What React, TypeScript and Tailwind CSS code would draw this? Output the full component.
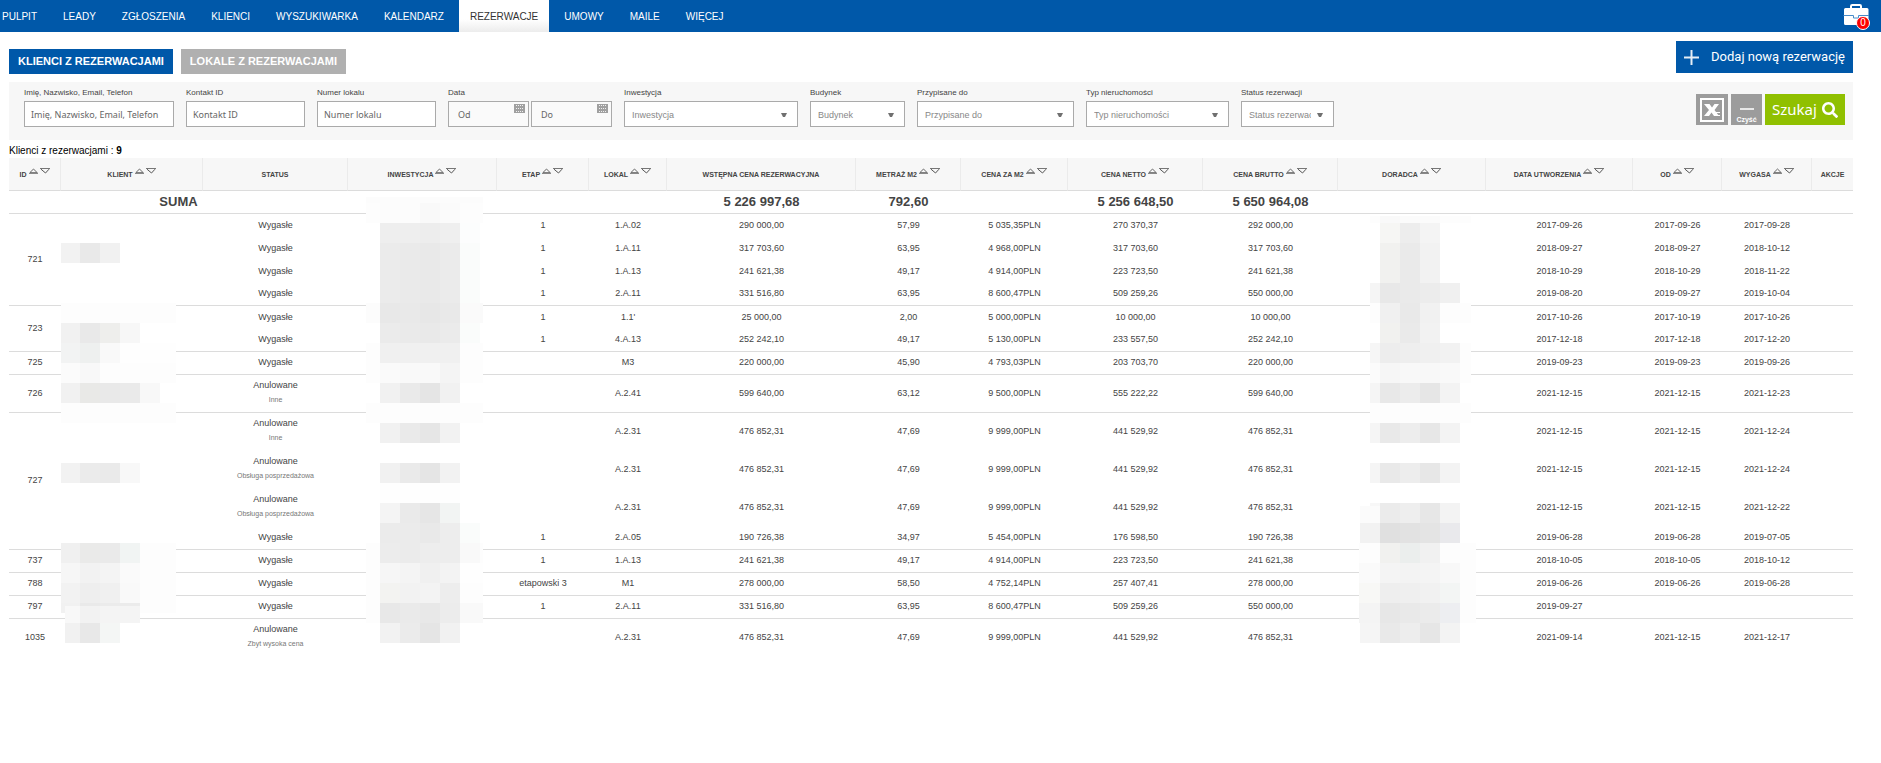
import React, { useState } from "react";
import { FaSearch } from "react-icons/fa";

interface Entry {
  status: string;
  reason?: string;
  stage?: string;
  unit: string;
  initial: string;
  area: string;
  perMeter: string;
  net: string;
  gross: string;
  created: string;
  from?: string;
  expires?: string;
}

interface Client {
  id: string;
  entries: Entry[];
}

interface Strip {
  x: number;
  y: number;
  h?: number;
  cells: [number, string][];
}

const menu = [
  "PULPIT",
  "LEADY",
  "ZGŁOSZENIA",
  "KLIENCI",
  "WYSZUKIWARKA",
  "KALENDARZ",
  "REZERWACJE",
  "UMOWY",
  "MAILE",
  "WIĘCEJ",
];

const clients: Client[] = [
  {
    id: "721",
    entries: [
      { status: "Wygasłe", stage: "1", unit: "1.A.02", initial: "290 000,00", area: "57,99", perMeter: "5 035,35PLN", net: "270 370,37", gross: "292 000,00", created: "2017-09-26", from: "2017-09-26", expires: "2017-09-28" },
      { status: "Wygasłe", stage: "1", unit: "1.A.11", initial: "317 703,60", area: "63,95", perMeter: "4 968,00PLN", net: "317 703,60", gross: "317 703,60", created: "2018-09-27", from: "2018-09-27", expires: "2018-10-12" },
      { status: "Wygasłe", stage: "1", unit: "1.A.13", initial: "241 621,38", area: "49,17", perMeter: "4 914,00PLN", net: "223 723,50", gross: "241 621,38", created: "2018-10-29", from: "2018-10-29", expires: "2018-11-22" },
      { status: "Wygasłe", stage: "1", unit: "2.A.11", initial: "331 516,80", area: "63,95", perMeter: "8 600,47PLN", net: "509 259,26", gross: "550 000,00", created: "2019-08-20", from: "2019-09-27", expires: "2019-10-04" },
    ],
  },
  {
    id: "723",
    entries: [
      { status: "Wygasłe", stage: "1", unit: "1.1'", initial: "25 000,00", area: "2,00", perMeter: "5 000,00PLN", net: "10 000,00", gross: "10 000,00", created: "2017-10-26", from: "2017-10-19", expires: "2017-10-26" },
      { status: "Wygasłe", stage: "1", unit: "4.A.13", initial: "252 242,10", area: "49,17", perMeter: "5 130,00PLN", net: "233 557,50", gross: "252 242,10", created: "2017-12-18", from: "2017-12-18", expires: "2017-12-20" },
    ],
  },
  {
    id: "725",
    entries: [
      { status: "Wygasłe", unit: "M3", initial: "220 000,00", area: "45,90", perMeter: "4 793,03PLN", net: "203 703,70", gross: "220 000,00", created: "2019-09-23", from: "2019-09-23", expires: "2019-09-26" },
    ],
  },
  {
    id: "726",
    entries: [
      { status: "Anulowane", reason: "Inne", unit: "A.2.41", initial: "599 640,00", area: "63,12", perMeter: "9 500,00PLN", net: "555 222,22", gross: "599 640,00", created: "2021-12-15", from: "2021-12-15", expires: "2021-12-23" },
    ],
  },
  {
    id: "727",
    entries: [
      { status: "Anulowane", reason: "Inne", unit: "A.2.31", initial: "476 852,31", area: "47,69", perMeter: "9 999,00PLN", net: "441 529,92", gross: "476 852,31", created: "2021-12-15", from: "2021-12-15", expires: "2021-12-24" },
      { status: "Anulowane", reason: "Obsługa posprzedażowa", unit: "A.2.31", initial: "476 852,31", area: "47,69", perMeter: "9 999,00PLN", net: "441 529,92", gross: "476 852,31", created: "2021-12-15", from: "2021-12-15", expires: "2021-12-24" },
      { status: "Anulowane", reason: "Obsługa posprzedażowa", unit: "A.2.31", initial: "476 852,31", area: "47,69", perMeter: "9 999,00PLN", net: "441 529,92", gross: "476 852,31", created: "2021-12-15", from: "2021-12-15", expires: "2021-12-22" },
      { status: "Wygasłe", stage: "1", unit: "2.A.05", initial: "190 726,38", area: "34,97", perMeter: "5 454,00PLN", net: "176 598,50", gross: "190 726,38", created: "2019-06-28", from: "2019-06-28", expires: "2019-07-05" },
    ],
  },
  {
    id: "737",
    entries: [
      { status: "Wygasłe", stage: "1", unit: "1.A.13", initial: "241 621,38", area: "49,17", perMeter: "4 914,00PLN", net: "223 723,50", gross: "241 621,38", created: "2018-10-05", from: "2018-10-05", expires: "2018-10-12" },
    ],
  },
  {
    id: "788",
    entries: [
      { status: "Wygasłe", stage: "etapowski 3", unit: "M1", initial: "278 000,00", area: "58,50", perMeter: "4 752,14PLN", net: "257 407,41", gross: "278 000,00", created: "2019-06-26", from: "2019-06-26", expires: "2019-06-28" },
    ],
  },
  {
    id: "797",
    entries: [
      { status: "Wygasłe", stage: "1", unit: "2.A.11", initial: "331 516,80", area: "63,95", perMeter: "8 600,47PLN", net: "509 259,26", gross: "550 000,00", created: "2019-09-27" },
    ],
  },
  {
    id: "1035",
    entries: [
      { status: "Anulowane", reason: "Zbyt wysoka cena", unit: "A.2.31", initial: "476 852,31", area: "47,69", perMeter: "9 999,00PLN", net: "441 529,92", gross: "476 852,31", created: "2021-09-14", from: "2021-12-15", expires: "2021-12-17" },
    ],
  },
];

// Pixelated blocks that hide personal data, measured from the header cell
const clientMask: Strip[] = [
  { x: 0, y: 53, cells: [[19, "#f2f2f2"], [20, "#e9e9e9"], [20, "#f1f1f1"]] },
  { x: 0, y: 113, cells: [[115, "#fdfdfd"]] },
  { x: 0, y: 133, cells: [[19, "#f1f1f1"], [20, "#e9e9e9"], [20, "#eeeeec"], [20, "#f7f7f7"]] },
  { x: 0, y: 153, cells: [[19, "#f2f3f3"], [20, "#eef0ef"], [20, "#f9f9f9"], [56, "#fefefe"]] },
  { x: 0, y: 173, cells: [[19, "#fbfbfb"], [20, "#f8f8f8"], [76, "#fdfdfd"]] },
  { x: 0, y: 193, cells: [[19, "#f1f1f1"], [20, "#e9e9e7"], [20, "#e9e9e9"], [20, "#eaeaea"], [20, "#f8f8f8"]] },
  { x: 0, y: 213, cells: [[115, "#fdfdfd"]] },
  { x: 0, y: 273, cells: [[19, "#f2f2f2"], [20, "#ebebeb"], [20, "#eaeaea"], [20, "#f8f8f8"]] },
  { x: 0, y: 353, cells: [[19, "#f0f0f0"], [20, "#eaeae9"], [20, "#eaeaea"], [20, "#f1f4f3"], [36, "#fdfdfd"]] },
  { x: 0, y: 373, cells: [[19, "#f6f6f6"], [20, "#f2f2f2"], [20, "#f4f4f4"], [20, "#fafafa"], [36, "#fdfdfd"]] },
  { x: 0, y: 393, cells: [[19, "#f2f2f2"], [20, "#eeeeee"], [20, "#f0f0f0"], [20, "#f9f9f9"], [36, "#fdfdfd"]] },
  { x: 0, y: 413, h: 10, cells: [[19, "#f1f1f1"], [20, "#e9e9e9"], [40, "#ebebeb"], [36, "#fdfdfd"]] },
  { x: 4, y: 416, h: 17, cells: [[15, "#f8f8f8"], [20, "#f2f2f2"], [40, "#f4f4f4"]] },
  { x: 4, y: 433, cells: [[15, "#f1f1f1"], [20, "#e8e8e8"], [20, "#f4f6f5"]] },
];

const investmentMask: Strip[] = [
  { x: 18, y: 7, h: 6, cells: [[117, "#fcfcfc"]] },
  { x: 18, y: 13, cells: [[14, "#fdfdfd"], [40, "#fcfcfc"], [20, "#f9f9f9"], [20, "#fbfbfb"], [23, "#fdfdfd"]] },
  { x: 32, y: 33, cells: [[40, "#eeeeee"], [20, "#ededed"], [20, "#efefef"], [20, "#fcfdfd"]] },
  { x: 32, y: 53, h: 60, cells: [[20, "#ebebeb"], [20, "#eaeaea"], [20, "#e9e9e9"], [20, "#ebebeb"], [20, "#fafcfb"]] },
  { x: 18, y: 113, cells: [[14, "#fcfcfc"], [20, "#e8e8e8"], [20, "#e9e9e9"], [20, "#e7e7e7"], [20, "#e9e9e9"], [23, "#fafafa"]] },
  { x: 32, y: 133, cells: [[20, "#ebebeb"], [20, "#eaeaea"], [20, "#e9e9e9"], [20, "#ebebeb"], [20, "#fafcfb"]] },
  { x: 18, y: 153, cells: [[14, "#fdfdfd"], [80, "#f0f0f0"], [23, "#fdfdfd"]] },
  { x: 18, y: 173, cells: [[14, "#fdfdfd"], [20, "#fafafa"], [40, "#f9f9f9"], [20, "#f4f4f4"], [23, "#fdfdfd"]] },
  { x: 32, y: 193, cells: [[20, "#f1f1f1"], [20, "#eaeaea"], [20, "#e5e5e5"], [20, "#f1f1f1"]] },
  { x: 18, y: 213, cells: [[117, "#fdfdfd"]] },
  { x: 32, y: 233, cells: [[20, "#f1f1f1"], [20, "#eaeaea"], [20, "#e6e6e6"], [20, "#f2f2f2"]] },
  { x: 32, y: 273, cells: [[20, "#f1f1f1"], [20, "#eaeaea"], [20, "#e5e5e5"], [20, "#f2f2f2"]] },
  { x: 32, y: 293, cells: [[80, "#fefefe"]] },
  { x: 32, y: 313, cells: [[20, "#f4f4f4"], [20, "#eaeaea"], [20, "#e6e6e6"], [20, "#f2f4f3"]] },
  { x: 32, y: 333, cells: [[40, "#ebebeb"], [20, "#e9e9e9"], [20, "#ededed"], [20, "#fafcfb"]] },
  { x: 18, y: 353, cells: [[14, "#fdfdfd"], [20, "#ececec"], [20, "#ebebeb"], [40, "#ededed"], [20, "#f9f9f9"], [3, "#fdfdfd"]] },
  { x: 18, y: 373, cells: [[14, "#fdfdfd"], [20, "#f6f6f6"], [20, "#f4f4f4"], [20, "#f0f0f0"], [20, "#f3f3f3"], [23, "#fefefe"]] },
  { x: 18, y: 393, cells: [[14, "#fdfdfd"], [20, "#f3f3f1"], [20, "#f2f2f2"], [20, "#f3f3f3"], [20, "#ededed"], [23, "#fdfdfd"]] },
  { x: 18, y: 413, cells: [[14, "#fdfdfd"], [20, "#e8e8e8"], [20, "#eaeaea"], [20, "#e8e8e8"], [20, "#ececec"], [23, "#f9f9f9"]] },
  { x: 32, y: 433, cells: [[20, "#f2f2f2"], [20, "#ebebeb"], [20, "#e5e5e5"], [20, "#f1f1f1"]] },
];

const adviserMask: Strip[] = [
  { x: 32, y: 26, h: 7, cells: [[10, "#fdfdfd"], [20, "#f9f9f9"], [40, "#fbfbfb"], [31, "#fdfdfd"]] },
  { x: 42, y: 33, cells: [[20, "#f6f6f4"], [20, "#ededed"], [20, "#f4f4f4"]] },
  { x: 42, y: 53, h: 40, cells: [[20, "#f1f1ef"], [20, "#eaeaea"], [20, "#f2f2f2"]] },
  { x: 32, y: 93, cells: [[10, "#f5f5f5"], [20, "#e8e8e8"], [20, "#eaeaea"], [20, "#ececec"], [20, "#f0f0f0"]] },
  { x: 32, y: 113, cells: [[10, "#fdfdfd"], [20, "#f0f0f0"], [20, "#e9e9e9"], [20, "#f1f1f1"], [31, "#fdfdfd"]] },
  { x: 42, y: 133, cells: [[20, "#f1f1ef"], [20, "#eaeaea"], [20, "#f2f2f2"]] },
  { x: 32, y: 153, cells: [[10, "#f6f6f6"], [20, "#ededed"], [20, "#eeeeee"], [20, "#f0f0f0"], [20, "#f2f2f2"], [11, "#fdfdfd"]] },
  { x: 32, y: 173, cells: [[10, "#fbfbfb"], [20, "#f6f6f6"], [40, "#f8f8f8"], [20, "#f9f9f9"], [11, "#fdfdfd"]] },
  { x: 32, y: 193, cells: [[10, "#f5f5f5"], [20, "#e8e8e8"], [20, "#ececec"], [20, "#e6e6e6"], [20, "#f3f3f3"]] },
  { x: 32, y: 213, cells: [[101, "#fdfdfd"]] },
  { x: 32, y: 233, cells: [[10, "#f5f5f5"], [20, "#e9e9e9"], [20, "#ededed"], [20, "#e7e7e7"], [20, "#f3f3f3"]] },
  { x: 32, y: 273, cells: [[10, "#f5f5f5"], [20, "#e9e9e9"], [20, "#ededed"], [20, "#e7e7e7"], [20, "#f3f3f3"]] },
  { x: 32, y: 313, cells: [[10, "#f7f7f7"], [20, "#ebebeb"], [20, "#eeeeee"], [20, "#e7e7e7"], [20, "#f3f3f3"]] },
  { x: 22, y: 316, h: 17, cells: [[20, "#fbfbfb"]] },
  { x: 22, y: 333, cells: [[20, "#f2f2f2"], [20, "#e0e0e0"], [20, "#e2e2e2"], [20, "#e4e4e4"], [20, "#e9e9ec"]] },
  { x: 21, y: 353, cells: [[21, "#fdfdfd"], [20, "#f1f1ef"], [20, "#ebeeed"], [20, "#f1f1f1"], [36, "#fdfdfd"]] },
  { x: 21, y: 373, cells: [[21, "#fafafa"], [20, "#f4f4f4"], [20, "#f3f3f3"], [20, "#f4f4f4"], [20, "#f8f8f8"], [16, "#fdfdfd"]] },
  { x: 21, y: 393, cells: [[21, "#f8f8f6"], [20, "#eeeeee"], [20, "#efefef"], [20, "#f1f1f1"], [20, "#f3f5f4"], [16, "#fdfdfd"]] },
  { x: 21, y: 413, cells: [[21, "#f4f4f4"], [20, "#e7e7e7"], [20, "#e9e9e9"], [20, "#ebebeb"], [20, "#edeef1"], [16, "#fdfdfd"]] },
  { x: 22, y: 433, cells: [[20, "#f5f5f5"], [20, "#e9e9e9"], [20, "#ededed"], [20, "#e6e6e6"], [20, "#f3f3f3"]] },
];

const columns: { label: string; width: string; sortable: boolean; mask?: Strip[] }[] = [
  { label: "ID", width: "w-[52px]", sortable: true },
  { label: "KLIENT", width: "w-[142px]", sortable: true, mask: clientMask },
  { label: "STATUS", width: "w-[145px]", sortable: false },
  { label: "INWESTYCJA", width: "w-[149px]", sortable: true, mask: investmentMask },
  { label: "ETAP", width: "w-[92px]", sortable: true },
  { label: "LOKAL", width: "w-[78px]", sortable: true },
  { label: "WSTĘPNA CENA REZERWACYJNA", width: "w-[189px]", sortable: false },
  { label: "METRAŻ M2", width: "w-[105px]", sortable: true },
  { label: "CENA ZA M2", width: "w-[107px]", sortable: true },
  { label: "CENA NETTO", width: "w-[135px]", sortable: true },
  { label: "CENA BRUTTO", width: "w-[135px]", sortable: true },
  { label: "DORADCA", width: "w-[148px]", sortable: true, mask: adviserMask },
  { label: "DATA UTWORZENIA", width: "w-[147px]", sortable: true },
  { label: "OD", width: "w-[89px]", sortable: true },
  { label: "WYGASA", width: "w-[90px]", sortable: true },
  { label: "AKCJE", width: "w-[41px]", sortable: false },
];

const Mask: React.FC<{ strips: Strip[] }> = ({ strips }) => (
  <svg
    className="absolute top-full left-0 pointer-events-none"
    width="148"
    height="453"
    shapeRendering="crispEdges"
    aria-hidden="true"
  >
    {strips.map((strip, row) => {
      let x = strip.x;
      return strip.cells.map(([w, fill], i) => {
        const left = x;
        x += w;
        return (
          <rect key={`${row}-${i}`} x={left} y={strip.y} width={w} height={strip.h ?? 20} fill={fill} />
        );
      });
    })}
  </svg>
);

const SortButtons: React.FC<{ label: string }> = ({ label }) => (
  <span className="flex gap-[2px] pb-2">
    <button type="button" aria-label={`${label} rosnąco`}>
      <svg width="9" height="6" viewBox="0 0 9 6" fill="none" stroke="#666">
        <path d="M0.8 4.7 L4.5 1 L8.2 4.7 Z" />
        <path d="M0 5.5 H9" stroke="#888" />
      </svg>
    </button>
    <button type="button" aria-label={`${label} malejąco`}>
      <svg width="10" height="6" viewBox="0 0 10 6" fill="none" stroke="#555">
        <path d="M1 1.2 L5.5 5 L9 1.2" />
        <path d="M0 0.5 H10" stroke="#777" />
      </svg>
    </button>
  </span>
);

const CalendarIcon = () => (
  <svg className="absolute top-[3px] right-1 pointer-events-none" width="11" height="9" viewBox="0 0 11 9">
    <rect width="11" height="9" fill="#a0a0a0" />
    <path
      d="M2 1.5H10M2 4.5H10M2 7.5H10"
      stroke="#f0f0f0"
      strokeDasharray="1 1"
    />
  </svg>
);

const TextField: React.FC<{ id: string; label: string; width: string }> = ({ id, label, width }) => (
  <div className={`flex flex-col gap-[3px] ${width}`}>
    <label htmlFor={id} className="text-[8px] leading-[10px] whitespace-nowrap">
      {label}
    </label>
    <input
      id={id}
      type="text"
      placeholder={label}
      className="w-full h-[26px] px-[6px] bg-white border border-[#aaa] font-['Noto_Sans',sans-serif] text-[9px] placeholder:text-[#666]"
    />
  </div>
);

const SelectField: React.FC<{ id: string; label: string; width: string }> = ({ id, label, width }) => (
  <div className={`flex flex-col gap-[3px] ${width}`}>
    <label htmlFor={id} className="text-[8px] leading-[10px] whitespace-nowrap">
      {label}
    </label>
    <div className="relative">
      <select
        id={id}
        className="block w-full h-[26px] appearance-none bg-white border border-[#aaa] pl-[7px] pr-[22px] pt-[3px] text-[9px] text-[#888]"
      >
        <option>{label}</option>
      </select>
      <svg className="absolute top-3 right-[11px] pointer-events-none" width="6" height="4" viewBox="0 0 6 4">
        <path d="M0 0H6L4 4H2Z" fill="#707070" />
      </svg>
    </div>
  </div>
);

const App: React.FC = () => {
  const [tab, setTab] = useState("clients");

  const tabClass = (name: string) =>
    `h-[25px] px-[9px] text-[11px] font-bold text-white whitespace-nowrap ${
      tab === name ? "bg-[#0058a9]" : "bg-[#b0b0b0]"
    }`;

  return (
    <div className="bg-white text-[#444] font-['Liberation_Sans',Arial,sans-serif]">
      {/* Top menu */}
      <header className="flex justify-between h-8 bg-[#0058a9] pr-[11px]">
        <nav className="flex gap-1">
          {menu.map((item) => (
            <a
              key={item}
              href="#"
              className={`flex items-center px-[11px] first:pl-[2px] text-[10px] ${
                item === "REZERWACJE"
                  ? "bg-linear-to-b from-white from-60% to-[#ececec] text-[#333]"
                  : "text-white"
              }`}
            >
              {item}
            </a>
          ))}
        </nav>
        <button type="button" aria-label="Teczka" className="relative w-[27px] h-[30px]">
          <svg width="26" height="22" viewBox="0 0 26 22">
            <path d="M8 5V2.2Q8 1 9.200 1H16.800Q18 1 18 2.200V5" fill="none" stroke="#fff" strokeWidth="2" />
            <path d="M2 4H24Q25.500 4 25.500 5.500V19.500Q25.500 21 24 21H2.500Q1 21 1 19.500V5.500Q1 4 2.500 4Z" fill="#fff" />
            <path d="M0.500 11.500H10.500V14H15.500V11.500H26" fill="none" stroke="#4a8cc8" />
          </svg>
          <span className="absolute right-0 bottom-0 flex items-center justify-center size-[14px] rounded-full border border-white bg-[#f00] text-white text-[10px] leading-none">
            0
          </span>
        </button>
      </header>

      <main className="pl-[9px] pr-7 pt-[9px]">
        <div className="flex items-end justify-between h-[33px] mb-2">
          <div className="flex gap-2">
            <button type="button" className={tabClass("clients")} onClick={() => setTab("clients")}>
              KLIENCI Z REZERWACJAMI
            </button>
            <button type="button" className={tabClass("units")} onClick={() => setTab("units")}>
              LOKALE Z REZERWACJAMI
            </button>
          </div>
          <button
            type="button"
            className="self-start flex items-center justify-between w-[177px] h-8 px-2 bg-[#0058a9] font-[Roboto,sans-serif] text-[13px] text-white whitespace-nowrap"
          >
            <svg width="15" height="15" viewBox="0 0 15 15" stroke="#e6eef6" strokeWidth="2">
              <path d="M7.500 0V15M0 7.500H15" />
            </svg>
            Dodaj nową rezerwację
          </button>
        </div>

        {/* Filters */}
        <form
          className="flex items-start justify-between h-[58px] bg-[#f7f7f7] pl-[15px] pr-2"
          onSubmit={(e) => e.preventDefault()}
        >
          <div className="flex gap-3 pt-[6px]">
            <TextField id="person" label="Imię, Nazwisko, Email, Telefon" width="w-[150px]" />
            <TextField id="contact" label="Kontakt ID" width="w-[119px]" />
            <TextField id="unit" label="Numer lokalu" width="w-[119px]" />
            <div className="flex flex-col gap-[3px]">
              <label htmlFor="from" className="text-[8px] leading-[10px]">
                Data
              </label>
              <div className="flex gap-[2px]">
                {["Od", "Do"].map((name) => (
                  <div key={name} className="relative w-[81px]">
                    <input
                      id={name === "Od" ? "from" : "to"}
                      aria-label={name}
                      type="text"
                      placeholder={name}
                      className="block w-full h-[26px] pl-[9px] bg-[#fafafa] border border-[#aaa] font-['Noto_Sans',sans-serif] text-[9px] placeholder:text-[#666]"
                    />
                    <CalendarIcon />
                  </div>
                ))}
              </div>
            </div>
            <SelectField id="investment" label="Inwestycja" width="w-[174px]" />
            <SelectField id="building" label="Budynek" width="w-[95px]" />
            <SelectField id="assigned" label="Przypisane do" width="w-[157px]" />
            <SelectField id="type" label="Typ nieruchomości" width="w-[143px]" />
            <SelectField id="status" label="Status rezerwacji" width="w-[93px]" />
          </div>
          <div className="flex gap-[3px] pt-3">
            <button type="button" aria-label="Eksport do Excela" className="flex items-center justify-center w-8 h-[31px] bg-[#9c9c9c]">
              <svg width="24" height="24" viewBox="0 0 24 24">
                <rect x="1" y="1" width="22" height="22" fill="none" stroke="#fff" strokeWidth="2" />
                <path d="M4 6H9.500L12 9.500L14.500 6H19L14.500 12L19 18H14L11.500 14.500L9 18H4L9 12Z" fill="#fff" />
                <path d="M15 14.500H20M16 17.500H20" stroke="#fff" />
              </svg>
            </button>
            <button type="button" className="flex flex-col items-center justify-end w-[31px] h-[31px] pb-[1px] bg-[#9c9c9c] text-white text-[7px] leading-[9px] font-bold">
              <svg className="mb-[5px]" width="14" height="2" viewBox="0 0 14 2">
                <rect width="14" height="2" fill="#e8e8e8" />
              </svg>
              Czyść
            </button>
            <button type="submit" className="flex items-center justify-between w-20 h-[31px] px-[7px] bg-[#90c000] font-['Noto_Sans',sans-serif] text-[15px] text-white">
              Szukaj
              <FaSearch size={16} />
            </button>
          </div>
        </form>

        <p className="pt-1 text-[10px] leading-[14px] text-black">
          Klienci z rezerwacjami : <b>9</b>
        </p>

        {/* Reservations */}
        <table className="w-full table-fixed border-separate border-spacing-0 text-center text-[9px] leading-[14px]">
          <thead>
            <tr className="h-[33px]">
              {columns.map((col) => (
                <th
                  key={col.label}
                  scope="col"
                  className={`relative p-0 pt-[2px] bg-[#f7f7f7] border-r border-b border-r-[#ebebeb] border-b-[#dcdcdc] last:border-r-0 text-[7px] whitespace-nowrap ${col.width}`}
                >
                  <span className="flex items-center justify-center gap-[2px]">
                    {col.label}
                    {col.sortable && <SortButtons label={col.label} />}
                  </span>
                  {col.mask && <Mask strips={col.mask} />}
                </th>
              ))}
            </tr>
          </thead>
          <tbody>
            <tr className="h-[23px] text-[13px] font-bold *:border-b *:border-[#dcdcdc]">
              <td colSpan={3}>SUMA</td>
              <td colSpan={3} />
              <td>5 226 997,68</td>
              <td>792,60</td>
              <td />
              <td>5 256 648,50</td>
              <td>5 650 964,08</td>
              <td colSpan={5} />
            </tr>
          </tbody>
          {clients.map((client, index) => {
            const line = index < clients.length - 1 ? "border-b border-[#dcdcdc]" : "";
            return (
              <tbody key={client.id}>
                {client.entries.map((entry, i) => {
                  const cell = i === client.entries.length - 1 ? line : "";
                  return (
                    <tr key={i} className={`*:pb-[2px] ${entry.reason ? "h-[38px]" : "h-[23px]"}`}>
                      {i === 0 && (
                        <>
                          <td rowSpan={client.entries.length} className={line}>
                            {client.id}
                          </td>
                          <td rowSpan={client.entries.length} className={line} />
                        </>
                      )}
                      <td className={cell}>
                        {entry.status}
                        {entry.reason && (
                          <div className="text-[7px] leading-[16px] text-[#777]">{entry.reason}</div>
                        )}
                      </td>
                      <td className={cell} />
                      <td className={cell}>{entry.stage}</td>
                      <td className={cell}>{entry.unit}</td>
                      <td className={cell}>{entry.initial}</td>
                      <td className={cell}>{entry.area}</td>
                      <td className={cell}>{entry.perMeter}</td>
                      <td className={cell}>{entry.net}</td>
                      <td className={cell}>{entry.gross}</td>
                      <td className={cell} />
                      <td className={cell}>{entry.created}</td>
                      <td className={cell}>{entry.from}</td>
                      <td className={cell}>{entry.expires}</td>
                      <td className={cell} />
                    </tr>
                  );
                })}
              </tbody>
            );
          })}
        </table>
      </main>
    </div>
  );
};

export default App;
